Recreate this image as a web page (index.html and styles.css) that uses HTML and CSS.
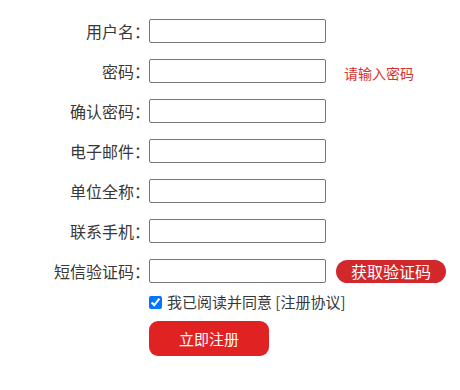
FILE: index.html
```html
<!DOCTYPE html>
<html lang="zh-CN">
<head>
<meta charset="utf-8">
<title>注册</title>
<link rel="stylesheet" href="styles.css">
</head>
<body>
<form class="reg-form">
  <div class="row">
    <label class="lbl">用户名：</label>
    <input class="field" type="text">
    <span class="extra"></span>
  </div>
  <div class="row">
    <label class="lbl">密码：</label>
    <input class="field" type="password">
    <span class="extra tip">请输入密码</span>
  </div>
  <div class="row">
    <label class="lbl">确认密码：</label>
    <input class="field" type="password">
    <span class="extra"></span>
  </div>
  <div class="row">
    <label class="lbl">电子邮件：</label>
    <input class="field" type="text">
    <span class="extra"></span>
  </div>
  <div class="row">
    <label class="lbl">单位全称：</label>
    <input class="field" type="text">
    <span class="extra"></span>
  </div>
  <div class="row">
    <label class="lbl">联系手机：</label>
    <input class="field" type="text">
    <span class="extra"></span>
  </div>
  <div class="row">
    <label class="lbl">短信验证码：</label>
    <input class="field" type="text">
    <span class="extra"><button type="button" class="sms-btn">获取验证码</button></span>
  </div>
  <div class="agree">
    <input type="checkbox" class="chk" checked>
    <span class="agree-text">我已阅读并同意 [注册协议]</span>
  </div>
  <div class="submit-row">
    <button type="button" class="submit-btn">立即注册</button>
  </div>
</form>
</body>
</html>
```
FILE: styles.css
```css
html, body {
  margin: 0;
  padding: 0;
  background: #ffffff;
}
body {
  font-family: "Noto Sans CJK SC", "Noto Sans", sans-serif;
  color: #333333;
}
.reg-form {
  padding-top: 19px;
  display: flex;
  flex-direction: column;
  gap: 16px;
}
.row {
  display: grid;
  grid-template-columns: 149px 177px auto;
  align-items: center;
  height: 24px;
}
.lbl {
  margin-right: -1px;
  text-align: right;
  font-size: 16px;
  line-height: 24px;
  color: #383838;
  white-space: nowrap;
}
.field {
  box-sizing: border-box;
  width: 177px;
  height: 24px;
  margin: 0;
  border: 1px solid #767676;
  border-radius: 2px;
  padding: 1px 4px;
  font-size: 14px;
  background: #fff;
  position: relative;
}
.extra {
  display: flex;
  align-items: center;
}
.tip {
  color: #d93030;
  font-size: 14px;
  padding-left: 18px;
  padding-top: 4px;
}
.sms-btn {
  margin-left: 10px;
  width: 110px;
  height: 23px;
  border: none;
  border-radius: 12px;
  background: #d3282b;
  color: #ffffff;
  font-family: "Noto Sans CJK SC", sans-serif;
  font-size: 16px;
  line-height: 23px;
  padding: 0;
  cursor: pointer;
}
.agree {
  margin-top: -6px;
  padding-left: 149px;
  display: flex;
  align-items: center;
  gap: 5px;
  height: 18px;
}
.chk {
  margin: 0;
  width: 13px;
  height: 13px;
}
.agree-text {
  font-size: 15px;
  color: #383838;
  line-height: 18px;
}
.submit-row {
  margin-top: -6px;
  padding-left: 149px;
}
.submit-btn {
  width: 120px;
  height: 35px;
  border: none;
  border-radius: 9px;
  background: #e12222;
  color: #ffffff;
  font-family: "Noto Sans CJK SC", sans-serif;
  font-size: 15px;
  padding: 0;
  cursor: pointer;
}
```
